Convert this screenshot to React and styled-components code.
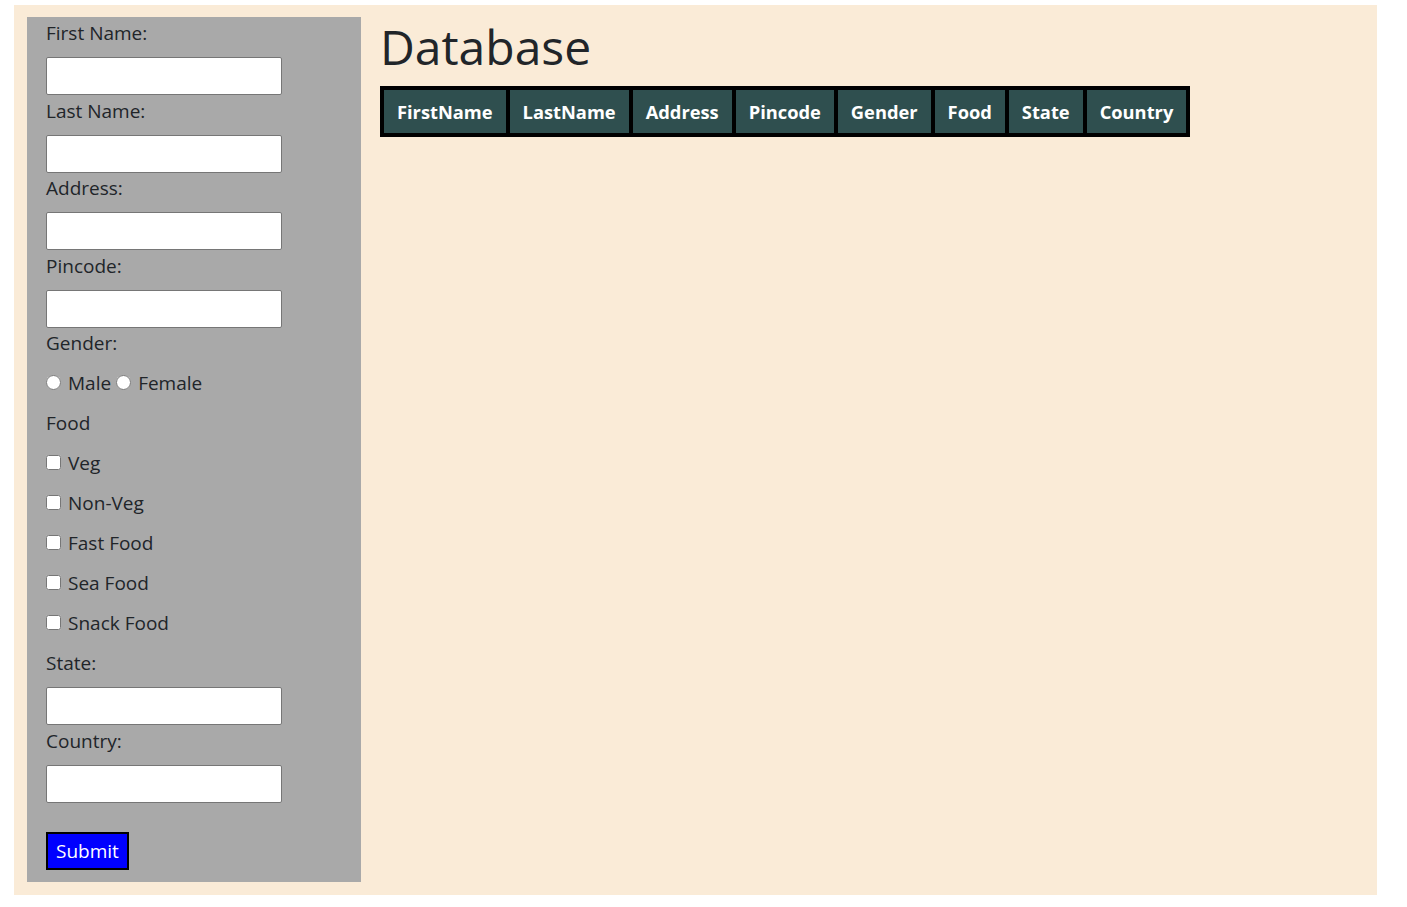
import React from 'react';
import styled, { createGlobalStyle } from 'styled-components';

const GlobalStyle = createGlobalStyle`
  body {
    margin: 0;
    background: #fff;
    font-family: "Open Sans", "Noto Sans", sans-serif;
    color: #212529;
  }
`;

// Fundo principal
const Page = styled.div`
  margin: 5px 0 0 14px;
  width: 1363px;
  box-sizing: border-box;
  padding: 12px 13px 13px;
  background-color: #faebd7;
  display: flex;
  align-items: flex-start;
  gap: 19px;
`;

// Painel do formulário
const FormPanel = styled.form`
  width: 334px;
  box-sizing: border-box;
  padding: 1px 19px 12px;
  background-color: #a9a9a9;
  display: flex;
  flex-direction: column;
  align-items: flex-start;
  font-size: 19px;
`;

const Label = styled.label`
  display: block;
  height: 30px;
  line-height: 30px;
  margin-bottom: ${(p) => (p.$spaced ? 10 : 9)}px;
`;

const TextInput = styled.input`
  width: 236px;
  height: 38px;
  box-sizing: border-box;
  margin: 0 0 0.5px;
  border: 1px solid #767676;
  border-radius: 2px;
  background: #fff;
`;

const OptionRow = styled.div`
  display: flex;
  align-items: center;
  height: 30px;
  line-height: 30px;
  margin-bottom: 10px;
`;

const Option = styled.label`
  display: flex;
  align-items: center;
  margin-right: 5px;
`;

const Choice = styled.input`
  width: 15px;
  height: 15px;
  margin: 0 7px 2px 0;
`;

const SubmitButton = styled.button`
  margin-top: 29px;
  height: 38px;
  padding: 0 8px;
  background-color: #0000ff;
  color: #fff;
  border: 2px solid #000;
  font-family: inherit;
  font-size: 19px;
  line-height: 1;
  cursor: pointer;
`;

// Coluna da tabela
const Content = styled.section`
  display: flex;
  flex-direction: column;
  align-items: flex-start;
`;

const Title = styled.h1`
  margin: 0 0 9px;
  font-size: 48px;
  font-weight: 500;
  line-height: 60px;
  color: #212529;
`;

const Table = styled.table`
  border: 1px solid #000;
  border-spacing: 2px;
  background: #000;
`;

const HeadCell = styled.th`
  border: 1px solid #000;
  background-color: #2f4f4f;
  color: #fff;
  font-size: 18.3px;
  font-weight: 700;
  line-height: 31px;
  padding: 6px 13px;
  text-align: center;
`;

const columns = ['FirstName', 'LastName', 'Address', 'Pincode', 'Gender', 'Food', 'State', 'Country'];
const foods = ['Veg', 'Non-Veg', 'Fast Food', 'Sea Food', 'Snack Food'];

const App = () => {
  const handleSubmit = (event) => {
    event.preventDefault();
  };

  return (
    <>
      <GlobalStyle />
      <Page>
        <FormPanel onSubmit={handleSubmit}>
          <Label>First Name:</Label>
          <TextInput type="text" />
          <Label>Last Name:</Label>
          <TextInput type="text" />
          <Label>Address:</Label>
          <TextInput type="text" />
          <Label>Pincode:</Label>
          <TextInput type="text" />
          <Label $spaced>Gender:</Label>
          <OptionRow>
            <Option>
              <Choice type="radio" name="gender" />
              Male
            </Option>
            <Option>
              <Choice type="radio" name="gender" />
              Female
            </Option>
          </OptionRow>
          <OptionRow>Food</OptionRow>
          {foods.map((food) => (
            <OptionRow key={food}>
              <Option>
                <Choice type="checkbox" />
                {food}
              </Option>
            </OptionRow>
          ))}
          <Label>State:</Label>
          <TextInput type="text" />
          <Label>Country:</Label>
          <TextInput type="text" />
          <SubmitButton type="submit">Submit</SubmitButton>
        </FormPanel>
        <Content>
          <Title>Database</Title>
          <Table>
            <thead>
              <tr>
                {columns.map((col) => (
                  <HeadCell key={col}>{col}</HeadCell>
                ))}
              </tr>
            </thead>
          </Table>
        </Content>
      </Page>
    </>
  );
};

export default App;
